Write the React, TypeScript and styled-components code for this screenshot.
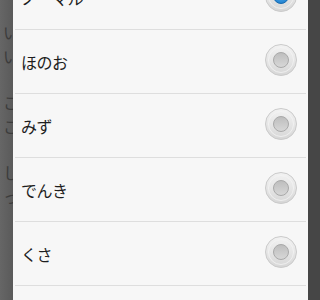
import React from "react";
import styled, { createGlobalStyle } from "styled-components";

const Global = createGlobalStyle`
  html, body { margin: 0; padding: 0; background: #4a4a4a; }
  body { font-family: "Noto Sans CJK JP", "Noto Sans", sans-serif; }
`;

const Screen = styled.div`
  display: flex;
  width: 320px;
  height: 300px;
  overflow: hidden;
`;

const LeftShade = styled.div`
  width: 13px;
  flex: none;
  background: linear-gradient(90deg, #666 0%, #5a5a5a 100%);
  overflow: hidden;
  padding-top: 20px;
  display: flex;
  flex-direction: column;
  gap: 22px;
`;

const ShadePara = styled.div`
  font-size: 16px;
  line-height: 24px;
  color: #3c3c3c;
  white-space: nowrap;
  padding-left: 3px;
`;

const RightShade = styled.div`
  flex: 1;
  background: #464646;
`;

const Dialog = styled.div`
  width: 295px;
  flex: none;
  background: #f7f7f7;
  overflow: hidden;
`;

const List = styled.div`
  display: flex;
  flex-direction: column;
  margin-top: -34px;
`;

const Row = styled.div`
  height: 64px;
  display: flex;
  flex-direction: column;
`;

const RowBody = styled.div`
  flex: 1;
  display: flex;
  align-items: center;
  justify-content: space-between;
  padding: 0 11px 0 8px;
`;

const Label = styled.span`
  font-size: 16px;
  color: #1e1e1e;
  letter-spacing: -0.5px;
`;

const Divider = styled.div`
  height: 1px;
  margin: 0 2px;
  background: #dedede;
`;

const RadioBox = styled.div`
  width: 32px;
  height: 32px;
  margin-bottom: 3px;
`;

const Radio: React.FC<{ checked?: boolean; id: string }> = ({ checked, id }) => (
  <RadioBox>
    <svg width="32" height="32" viewBox="0 0 32 32">
      <defs>
        <linearGradient id={`o${id}`} x1="0" y1="0" x2="0" y2="1">
          <stop offset="0" stopColor="#f2f2f2" />
          <stop offset="0.5" stopColor="#e6e6e6" />
          <stop offset="1" stopColor="#d6d6d6" />
        </linearGradient>
        <linearGradient id={`i${id}`} x1="0" y1="0" x2="0" y2="1">
          <stop offset="0" stopColor="#bdbdbd" />
          <stop offset="1" stopColor="#d8d8d8" />
        </linearGradient>
        <radialGradient id={`b${id}`} cx="0.5" cy="0.45" r="0.55">
          <stop offset="0" stopColor="#58b4f0" />
          <stop offset="1" stopColor="#1f7fcf" />
        </radialGradient>
      </defs>
      <circle cx="16" cy="16" r="15.5" fill={`url(#o${id})`} stroke="#cacaca" strokeWidth="1" />
      <circle cx="16" cy="16" r="12.5" fill="none" stroke="#f4f4f4" strokeWidth="1" opacity="0.8" />
      <circle
        cx="16"
        cy="16"
        r="7.5"
        fill={checked ? `url(#b${id})` : `url(#i${id})`}
        stroke={checked ? "#1a6cb0" : "#a9a9a9"}
        strokeWidth="1"
      />
    </svg>
  </RadioBox>
);

const items = [
  { label: "ノーマル", checked: true },
  { label: "ほのお" },
  { label: "みず" },
  { label: "でんき" },
  { label: "くさ" },
  { label: "こおり" },
];

export default function App() {
  return (
    <>
      <Global />
      <Screen>
        <LeftShade>
          <ShadePara>いい<br />いう</ShadePara>
          <ShadePara>こう<br />こう</ShadePara>
          <ShadePara>しか<br />っか</ShadePara>
        </LeftShade>
        <Dialog>
          <List>
            {items.map((it, i) => (
              <Row key={it.label}>
                <RowBody>
                  <Label>{it.label}</Label>
                  <Radio checked={it.checked} id={String(i)} />
                </RowBody>
                <Divider />
              </Row>
            ))}
          </List>
        </Dialog>
        <RightShade />
      </Screen>
    </>
  );
}
